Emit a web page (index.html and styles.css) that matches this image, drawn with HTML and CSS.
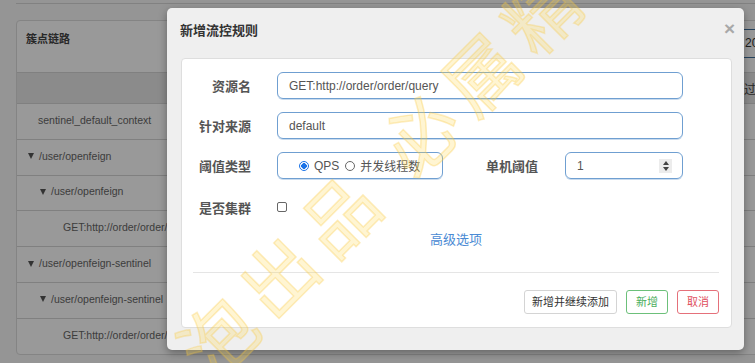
FILE: index.html
```html
<!DOCTYPE html>
<html lang="zh">
<head>
<meta charset="utf-8">
<title>新增流控规则</title>
<link rel="stylesheet" href="styles.css">
</head>
<body>
<div class="page">
  <div class="topline"></div>
  <div class="panel">
    <div class="panel-head">
      <span class="panel-title">簇点链路</span>
      <span class="search">20</span>
    </div>
    <div class="thead">
      <span></span>
      <span class="th">通过QPS</span>
    </div>
    <div class="tr"><span class="cell lv0-leaf">sentinel_default_context</span></div>
    <div class="tr"><span class="cell lv0"><i class="caret"></i>/user/openfeign</span></div>
    <div class="tr"><span class="cell lv1"><i class="caret"></i>/user/openfeign</span></div>
    <div class="tr"><span class="cell lv2">GET:http://order/order/query</span></div>
    <div class="tr"><span class="cell lv0"><i class="caret"></i>/user/openfeign-sentinel</span></div>
    <div class="tr"><span class="cell lv1"><i class="caret"></i>/user/openfeign-sentinel</span></div>
    <div class="tr"><span class="cell lv2">GET:http://order/order/query</span></div>
  </div>
</div>

<div class="backdrop"></div>

<div class="modal">
  <div class="modal-head">
    <span class="modal-title">新增流控规则</span>
    <span class="close">×</span>
  </div>
  <div class="modal-body">
    <div class="card">
      <div class="frow">
        <label class="lbl">资源名</label>
        <div class="inp wide">GET:http://order/order/query</div>
      </div>
      <div class="frow">
        <label class="lbl">针对来源</label>
        <div class="inp wide">default</div>
      </div>
      <div class="frow">
        <label class="lbl">阈值类型</label>
        <div class="inp radios">
          <span class="radio on"></span><span class="rtxt">QPS</span>
          <span class="radio"></span><span class="rtxt">并发线程数</span>
        </div>
        <label class="lbl lbl2">单机阈值</label>
        <div class="inp num">
          <span>1</span>
          <span class="spin"><i class="up"></i><i class="down"></i></span>
        </div>
      </div>
      <div class="frow crow">
        <label class="lbl">是否集群</label>
        <span class="check"></span>
      </div>
      <div class="adv">高级选项</div>
      <div class="sep"></div>
      <div class="btns">
        <span class="btn">新增并继续添加</span>
        <span class="btn ok">新增</span>
        <span class="btn cancel">取消</span>
      </div>
    </div>
  </div>
</div>

<div class="wm-layer"><div class="watermark">泡出品 必属精品</div></div>
</body>
</html>
```
FILE: styles.css
```css
html, body {
  margin: 0;
  padding: 0;
  width: 755px;
  height: 363px;
  overflow: hidden;
}
body {
  background: #f8f8f8;
  font-family: "Liberation Sans", "Noto Sans CJK SC", sans-serif;
  position: relative;
}
.page {
  padding-left: 16px;
  height: 363px;
  box-sizing: border-box;
  overflow: hidden;
}
.topline {
  height: 3px;
  border-bottom: 1px solid #d8d8d8;
  margin-right: -20px;
}
.panel {
  margin-top: 16px;
  margin-right: -20px;
  background: #fff;
  border: 1px solid #dcdcdc;
  border-radius: 4px;
}
.panel-head {
  height: 51px;
  box-sizing: border-box;
  padding: 8px 9px 0 9px;
  display: flex;
  justify-content: space-between;
  align-items: flex-start;
}
.panel-title {
  font-size: 11px;
  font-weight: bold;
  color: #444;
  line-height: 20px;
}
.search {
  width: 27px;
  height: 29px;
  box-sizing: border-box;
  border: 1px solid #3f6e9c;
  border-right: 0;
  padding-left: 6px;
  font-size: 12px;
  line-height: 27px;
  color: #333;
}
.thead {
  height: 30px;
  border-top: 1px solid #d6d6d6;
  background: #e8e8e8;
  display: grid;
  grid-template-columns: 715px 1fr;
  align-items: center;
}
.th {
  font-size: 12px;
  color: #444;
  white-space: nowrap;
}
.tr {
  border-top: 1px solid #d6d6d6;
  display: flex;
  align-items: center;
  padding-bottom: 3px;
  box-sizing: border-box;
  height: 35.8px;
}
.cell {
  font-size: 10.5px;
  color: #666;
  display: flex;
  align-items: center;
  white-space: nowrap;
}
.lv0-leaf { padding-left: 21px; }
.lv0 { padding-left: 11px; }
.lv1 { padding-left: 23px; }
.lv2 { padding-left: 46px; }
.caret {
  width: 0;
  height: 0;
  border-left: 3.5px solid transparent;
  border-right: 3.5px solid transparent;
  border-top: 6px solid #555;
  margin-right: 5px;
  margin-top: 1px;
}

.backdrop {
  position: absolute;
  inset: 0;
  background: rgba(0, 0, 0, 0.4);
}

.modal {
  position: absolute;
  left: 167px;
  top: 8px;
  width: 577px;
  height: 342px;
  background: #efefef;
  border-radius: 5px;
  box-shadow: 0 3px 9px rgba(0, 0, 0, 0.35);
}
.modal-head {
  height: 50px;
  box-sizing: border-box;
  padding: 14px 13px 0 13px;
  display: flex;
  justify-content: space-between;
  align-items: flex-start;
}
.modal-title {
  font-size: 13px;
  font-weight: bold;
  color: #333;
  line-height: 18px;
}
.close {
  font-size: 19px;
  font-weight: bold;
  color: #a8a8a8;
  line-height: 14px;
  margin-right: -4px;
}
.modal-body {
  padding: 0 12px 0 14px;
}
.card {
  background: #fff;
  border: 1px solid #dedede;
  border-radius: 4px;
  padding: 13px 12px 13px 11px;
}
.frow {
  display: flex;
  align-items: center;
  height: 27px;
  margin-bottom: 13px;
}
.lbl {
  width: 58px;
  margin-right: 26px;
  text-align: right;
  font-size: 13px;
  font-weight: bold;
  color: #555;
  white-space: nowrap;
}
.lbl2 {
  width: 95px;
  margin-right: 27px;
}
.inp {
  height: 27px;
  box-sizing: border-box;
  border: 1px solid #6f9fd1;
  border-radius: 6px;
  box-shadow: 0 1px 0 #c9dbee;
  font-size: 12px;
  color: #555;
  display: flex;
  align-items: center;
  padding-left: 11px;
}
.wide { width: 406px; }
.radios {
  width: 166px;
  padding-left: 21px;
}
.radio {
  width: 10px;
  height: 10px;
  box-sizing: border-box;
  border: 1px solid #666;
  border-radius: 50%;
  margin-right: 5px;
}
.radio.on {
  border-color: #1a73e8;
  background: radial-gradient(circle, #1a73e8 0 2.6px, #fff 3px);
}
.rtxt {
  margin-right: 6px;
  color: #555;
}
.num {
  width: 118px;
  justify-content: space-between;
  padding-right: 10px;
}
.spin {
  width: 13px;
  height: 14px;
  background: #ececec;
  display: flex;
  flex-direction: column;
  align-items: center;
  justify-content: center;
  gap: 2px;
}
.spin .up {
  border-left: 3.5px solid transparent;
  border-right: 3.5px solid transparent;
  border-bottom: 4px solid #444;
}
.spin .down {
  border-left: 3.5px solid transparent;
  border-right: 3.5px solid transparent;
  border-top: 4px solid #444;
}
.crow {
  height: 30px;
  margin-bottom: 0;
}
.check {
  width: 10px;
  height: 10px;
  box-sizing: border-box;
  border: 1px solid #666;
  border-radius: 2px;
  background: #fff;
}
.adv {
  margin-top: 9px;
  text-align: center;
  font-size: 13px;
  line-height: 18px;
  color: #4a8ad4;
}
.sep {
  margin-top: 23px;
  border-top: 1px solid #e5e5e5;
}
.btns {
  margin-top: 17px;
  display: flex;
  justify-content: flex-end;
  gap: 9px;
}
.btn {
  height: 24px;
  box-sizing: border-box;
  border: 1px solid #d4d4d4;
  border-radius: 3px;
  font-size: 11px;
  line-height: 22px;
  color: #333;
  padding: 0 7px;
  background: #fff;
}
.btn.ok {
  border-color: #6cc07a;
  color: #4cae5c;
  width: 42px;
  padding: 0;
  text-align: center;
}
.btn.cancel {
  border-color: #e5707a;
  color: #e0505e;
  width: 42px;
  padding: 0;
  text-align: center;
}

.wm-layer {
  position: absolute;
  inset: 0;
  overflow: hidden;
  pointer-events: none;
}
.watermark {
  position: absolute;
  left: 189px;
  top: 324px;
  font-size: 74px;
  line-height: 74px;
  letter-spacing: 12px;
  white-space: nowrap;
  font-family: "Noto Sans CJK SC", sans-serif;
  color: rgba(255, 215, 80, 0.26);
  -webkit-text-stroke: 1.5px rgba(248, 200, 60, 0.3);
  transform-origin: 0 50%;
  transform: rotate(-45deg);
}
```
